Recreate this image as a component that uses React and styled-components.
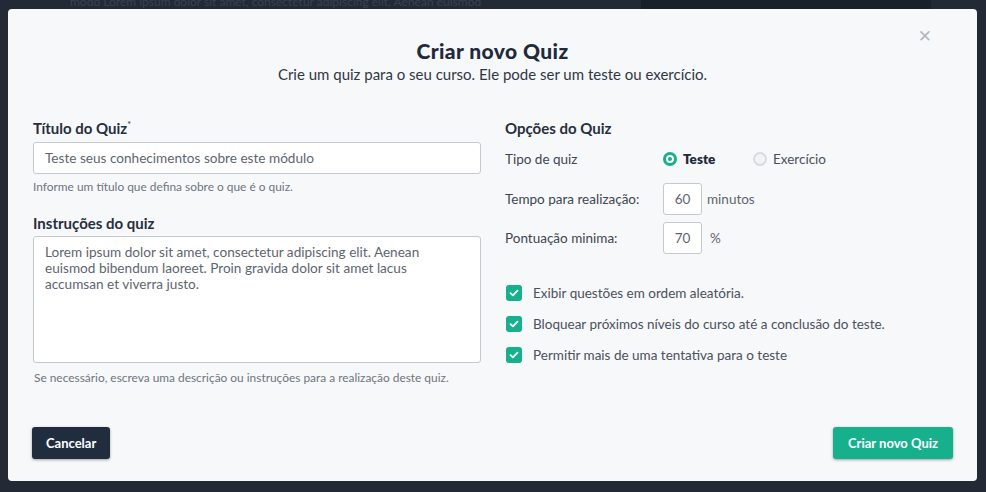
import React from "react";
import styled, { createGlobalStyle } from "styled-components";

const Global = createGlobalStyle`
  html, body { margin: 0; padding: 0; }
  body {
    background: #232a35;
    font-family: Lato, "Open Sans", sans-serif;
    width: 986px;
    height: 492px;
    overflow: hidden;
  }
  * { box-sizing: border-box; }
`;

const Screen = styled.div`
  position: relative;
  width: 986px;
  height: 492px;
  padding: 9px 9px 11px 8px;
`;

const Backdrop = styled.div`
  position: absolute;
  top: -6px;
  left: 70px;
  font-size: 12px;
  color: #3a4250;
  white-space: nowrap;
`;

const BackBlock = styled.div`
  position: absolute;
  top: 0;
  left: 641px;
  width: 290px;
  height: 9px;
  background: #1a2029;
`;

const Modal = styled.div`
  position: relative;
  height: 100%;
  background: #f7f8fa;
  border-radius: 4px;
  padding: 29px 24px 22px 24px;
  display: flex;
  flex-direction: column;
`;

const Close = styled.button`
  position: absolute;
  top: 18px;
  right: 45px;
  border: 0;
  background: none;
  padding: 0;
  color: #b3b8be;
  font-size: 17px;
  line-height: 18px;
  font-weight: 700;
  font-family: "DejaVu Sans", sans-serif;
  cursor: pointer;
`;

const Header = styled.div`
  text-align: center;
  color: #1f2a3a;
`;

const Title = styled.h1`
  margin: 0;
  font-size: 21px;
  font-weight: 900;
  letter-spacing: 0.4px;
  line-height: 26px;
`;

const Subtitle = styled.p`
  margin: 0;
  font-size: 15px;
  color: #2f3744;
  line-height: 20px;
`;

const Columns = styled.div`
  display: grid;
  grid-template-columns: 448px 1fr;
  column-gap: 24px;
  margin-top: 35px;
  padding-left: 1px;
`;

const Col = styled.div`
  display: flex;
  flex-direction: column;
`;

const Label = styled.div`
  font-size: 15px;
  font-weight: 700;
  color: #262f3c;
  line-height: 18px;
  margin-bottom: ${(p) => p.$mb}px;
  sup {
    font-size: 9px;
    font-weight: 400;
    line-height: 0;
    vertical-align: 6px;
  }
`;

const TextInput = styled.div`
  height: 32px;
  border: 1px solid #c5c9cf;
  border-radius: 3px;
  background: #fff;
  padding: 0 11px;
  display: flex;
  align-items: center;
  font-size: 13.6px;
  color: #5e6570;
`;

const TextArea = styled.div`
  height: 127px;
  border: 1px solid #c5c9cf;
  border-radius: 3px;
  background: #fff;
  padding: 7px 46px 7px 11px;
  font-size: 13.6px;
  line-height: 16px;
  color: #5e6570;
`;

const Help = styled.div`
  font-size: 11.9px;
  line-height: 13px;
  color: #6e7580;
  margin-top: ${(p) => p.$mt}px;
  margin-bottom: ${(p) => p.$mb || 0}px;
  padding-left: ${(p) => p.$pl || 0}px;
`;

const OptRow = styled.div`
  display: grid;
  grid-template-columns: 158px auto;
  align-items: center;
  height: ${(p) => p.$h}px;
  margin-bottom: ${(p) => p.$mb || 0}px;
`;

const OptLabel = styled.span`
  font-size: 13.5px;
  color: #3e4550;
`;

const Radios = styled.div`
  display: flex;
  align-items: center;
`;

const RadioItem = styled.label`
  display: flex;
  align-items: center;
  gap: 6px;
  font-size: 13.5px;
  width: ${(p) => p.$w || "auto"};
  color: ${(p) => (p.$on ? "#1f2a3a" : "#4a515c")};
  font-weight: ${(p) => (p.$on ? 800 : 400)};
`;

const RadioDot = styled.span`
  width: 14px;
  height: 14px;
  border-radius: 50%;
  border: ${(p) => (p.$on ? "3px solid #16b08d" : "2px solid #d8dbdf")};
  background: ${(p) => (p.$on ? "#fff" : "#f2f3f5")};
  display: flex;
  align-items: center;
  justify-content: center;
  &::after {
    content: "";
    display: ${(p) => (p.$on ? "block" : "none")};
    width: 4px;
    height: 4px;
    border-radius: 50%;
    background: #16b08d;
  }
`;

const NumWrap = styled.div`
  display: flex;
  align-items: center;
  gap: ${(p) => p.$gap}px;
`;

const NumBox = styled.div`
  width: 39px;
  height: 32px;
  border: 1px solid #c5c9cf;
  border-radius: 3px;
  background: #fff;
  display: flex;
  align-items: center;
  justify-content: center;
  font-size: 13.5px;
  color: #5e6570;
`;

const Unit = styled.span`
  font-size: 13.5px;
  color: #5e6570;
`;

const Checks = styled.div`
  display: flex;
  flex-direction: column;
  gap: 15px;
  margin-top: 31px;
  padding-left: 1px;
`;

const CheckItem = styled.label`
  display: flex;
  align-items: center;
  gap: 11px;
  font-size: 13.5px;
  color: #4a515c;
  height: 16px;
`;

const CheckBox = styled.span`
  width: 16px;
  height: 16px;
  border-radius: 3px;
  background: #16b08d;
  display: flex;
  align-items: center;
  justify-content: center;
`;

const Footer = styled.div`
  margin-top: auto;
  display: flex;
  justify-content: space-between;
  align-items: center;
`;

const Button = styled.button`
  height: 32px;
  border: 0;
  border-radius: 3px;
  padding: 0 ${(p) => p.$px}px;
  font-family: Lato, sans-serif;
  font-weight: 700;
  font-size: 13px;
  color: #fff;
  background: ${(p) => (p.$primary ? "#16b08d" : "#1f2d3f")};
  box-shadow: 0 1px 3px rgba(0, 0, 0, 0.35);
  cursor: pointer;
`;

const Check = () => (
  <svg width="10" height="8" viewBox="0 0 10 8">
    <path d="M1.5 4.2 L3.9 6.4 L8.5 1.6" fill="none" stroke="#fff" strokeWidth="1.8" strokeLinecap="round" strokeLinejoin="round" />
  </svg>
);

export default function App() {
  return (
    <>
      <Global />
      <Screen>
        <Backdrop>modo Lorem ipsum dolor sit amet, consectetur adipiscing elit. Aenean euismod</Backdrop>
        <BackBlock />
        <Modal>
          <Close aria-label="Fechar">✕</Close>
          <Header>
            <Title>Criar novo Quiz</Title>
            <Subtitle>Crie um quiz para o seu curso. Ele pode ser um teste ou exercício.</Subtitle>
          </Header>
          <Columns>
            <Col>
              <Label $mb={5}>Título do Quiz<sup>*</sup></Label>
              <TextInput>Teste seus conhecimentos sobre este módulo</TextInput>
              <Help $mt={6} $mb={21}>Informe um título que defina sobre o que é o quiz.</Help>
              <Label $mb={4}>Instruções do quiz</Label>
              <TextArea>
                Lorem ipsum dolor sit amet, consectetur adipiscing elit. Aenean euismod bibendum laoreet. Proin gravida dolor sit amet lacus accumsan et viverra justo.
              </TextArea>
              <Help $mt={8} $pl={1}>Se necessário, escreva uma descrição ou instruções para a realização deste quiz.</Help>
            </Col>
            <Col>
              <Label $mb={9}>Opções do Quiz</Label>
              <OptRow $h={26} $mb={11}>
                <OptLabel>Tipo de quiz</OptLabel>
                <Radios>
                  <RadioItem $on $w="90px"><RadioDot $on />Teste</RadioItem>
                  <RadioItem><RadioDot />Exercício</RadioItem>
                </Radios>
              </OptRow>
              <OptRow $h={32} $mb={7}>
                <OptLabel>Tempo para realização:</OptLabel>
                <NumWrap $gap={5}>
                  <NumBox>60</NumBox>
                  <Unit>minutos</Unit>
                </NumWrap>
              </OptRow>
              <OptRow $h={32}>
                <OptLabel>Pontuação minima:</OptLabel>
                <NumWrap $gap={8}>
                  <NumBox>70</NumBox>
                  <Unit>%</Unit>
                </NumWrap>
              </OptRow>
              <Checks>
                <CheckItem><CheckBox><Check /></CheckBox>Exibir questões em ordem aleatória.</CheckItem>
                <CheckItem><CheckBox><Check /></CheckBox>Bloquear próximos níveis do curso até a conclusão do teste.</CheckItem>
                <CheckItem><CheckBox><Check /></CheckBox>Permitir mais de uma tentativa para o teste</CheckItem>
              </Checks>
            </Col>
          </Columns>
          <Footer>
            <Button $px={14}>Cancelar</Button>
            <Button $primary $px={15}>Criar novo Quiz</Button>
          </Footer>
        </Modal>
      </Screen>
    </>
  );
}
